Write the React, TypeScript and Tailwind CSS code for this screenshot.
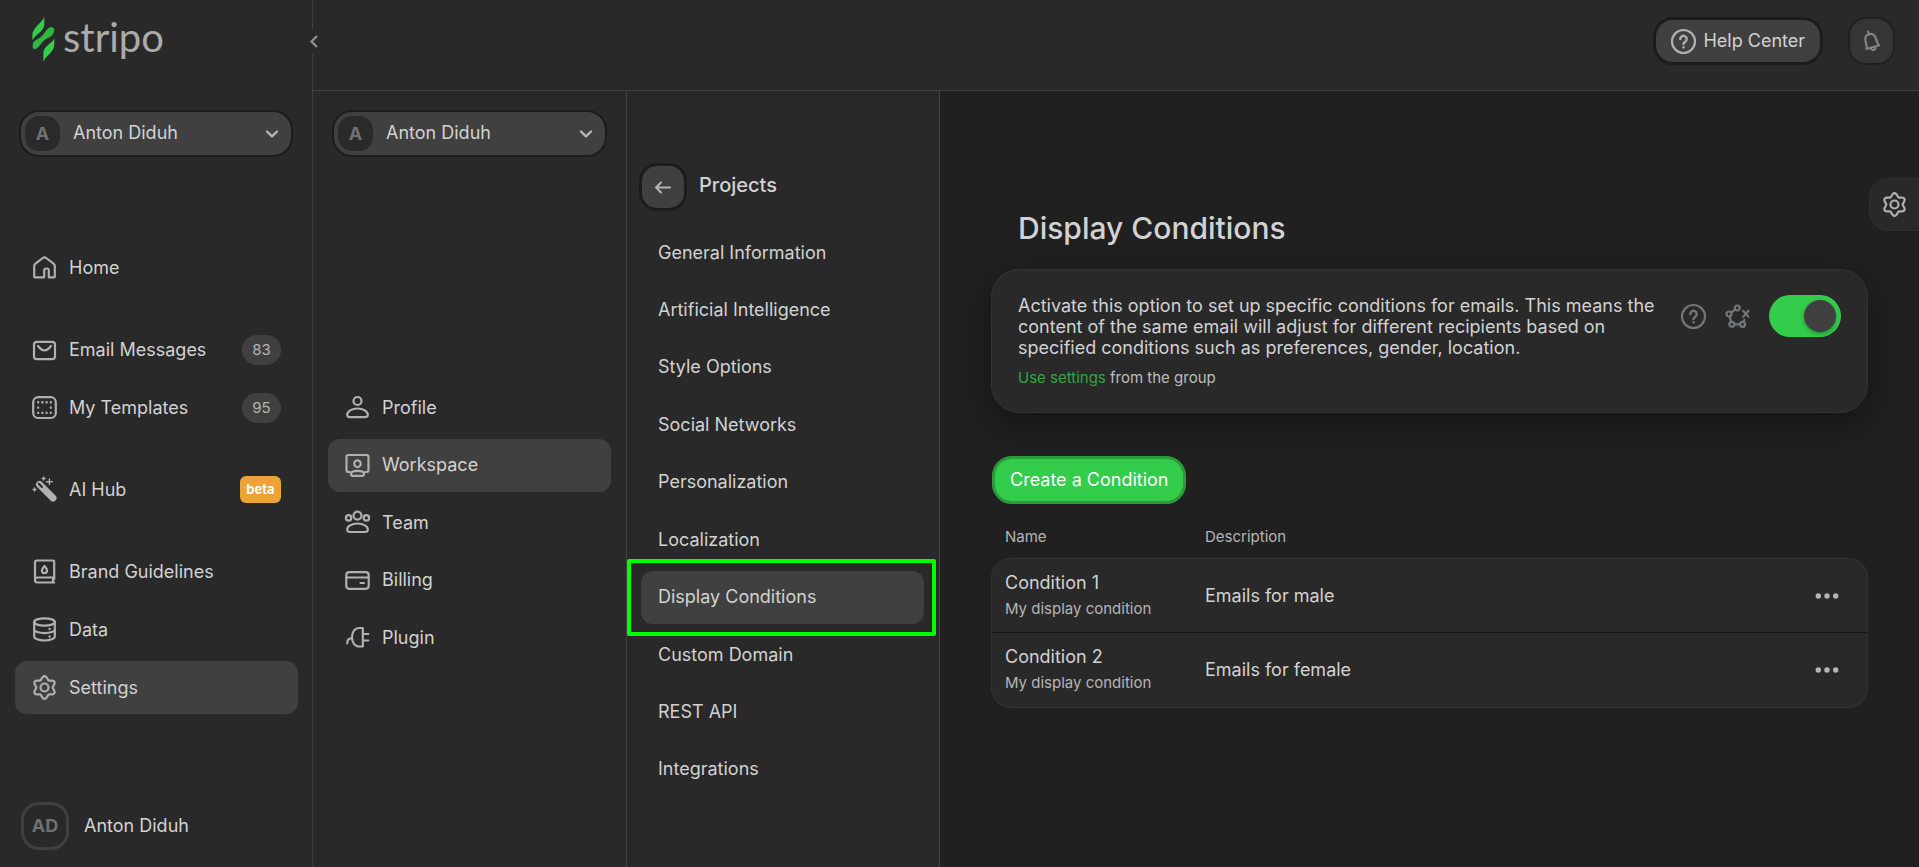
import React, { useState } from "react";

const gearPath =
  Array.from({ length: 72 }, (_, i) => {
    const a = (i * Math.PI) / 36;
    const r = 9.8 + 1.6 * Math.cos(6 * a);
    const x = 12.5 + r * Math.sin(a);
    const y = 12.5 - r * Math.cos(a);
    return `${i === 0 ? "M" : "L"}${x.toFixed(2)} ${y.toFixed(2)}`;
  }).join("") + "Z";

const icons = {
  home: (
    <path d="M2.2 21.5V11.2q0-1.6 1.3-2.6L10.8 3q1.7-1.3 3.4 0l7.3 5.6q1.3 1 1.3 2.6v10.3q0 .8-.8.8h-5.2v-6.8q0-2-2-2h-.6q-2 0-2 2v6.8H3q-.8 0-.8-.8z" />
  ),
  mail: (
    <>
      <rect x="2" y="4.800" width="21" height="17.400" rx="3" />
      <path d="M6 9q3.600 4.500 6.500 4.500T19 9" />
    </>
  ),
  templates: (
    <>
      <rect x="1.200" y="2.200" width="22.600" height="20.800" rx="5" />
      <path
        d="M5.200 7.300h2M9.400 7.300h2M13.600 7.300h2M17.800 7.300h2M5.200 12.600h2M17.800 12.600h2M5.200 17.900h2M9.400 17.900h2M13.600 17.900h2M17.800 17.900h2"
        strokeLinecap="butt"
        strokeWidth="2.400"
      />
    </>
  ),
  wand: (
    <>
      <path d="M7.500 7.500 21 21" strokeWidth="7" />
      <path d="M6.800 6.800l3.200 3.200" stroke="#292929" strokeWidth="2" />
      <path d="M17.400 2v5.600M14.600 4.800h5.600M11.600 0v3M10.100 1.500h3M2.500 11v3M1 12.500h3" strokeWidth="1.400" />
    </>
  ),
  brand: (
    <>
      <path d="M22.200 20V2.500q0-1-1-1H5q-2 0-2 2V21q0 2.500 2.500 2.500h16.700M3 20.500q.5-2 2.500-2h16.700M21 18.500v5" />
      <path d="M12.500 7q2.600 3 2.600 4.500a2.600 2.600 0 0 1-5.200 0Q9.900 10 12.500 7z" />
    </>
  ),
  data: (
    <>
      <ellipse cx="12.500" cy="5" rx="10.300" ry="3.700" />
      <path d="M2.200 5v14.500c0 2.200 4.600 4 10.300 4s10.300-1.800 10.300-4V5M2.200 12.500c0 2 4.600 3.600 10.300 3.600s10.300-1.600 10.300-3.600" />
      <path d="M17.600 12v.1M17.600 19.500v.1" strokeWidth="2.400" />
    </>
  ),
  gear: (
    <>
      <path d={gearPath} />
      <circle cx="12.500" cy="12.500" r="4" />
    </>
  ),
  profile: (
    <>
      <circle cx="12.500" cy="6" r="4" />
      <path d="M12.500 13.500c6 0 10.300 3 10.300 6.300 0 1.800-1 2.400-2.800 2.400H5c-1.800 0-2.800-.6-2.800-2.400 0-3.300 4.300-6.300 10.300-6.300z" />
    </>
  ),
  workspace: (
    <>
      <path d="M4.800 19H3.500q-2 0-2-2V4q0-2 2-2h18q2 0 2 2v13q0 2-2 2h-1.300" />
      <circle cx="12.500" cy="10.700" r="3.300" />
      <path d="M12.500 17.800c4 0 6.600 1.500 6.600 3.300 0 1.300-.8 1.700-2 1.700H7.900c-1.200 0-2-.4-2-1.700 0-1.800 2.600-3.300 6.600-3.300z" />
    </>
  ),
  team: (
    <>
      <circle cx="12.500" cy="5.600" r="4" />
      <circle cx="3.600" cy="7.900" r="2.700" />
      <circle cx="21.400" cy="7.900" r="2.700" />
      <path d="M12.500 13.500c6 0 10.300 3 10.300 6 0 1.800-1 2.500-2.800 2.500H5c-1.800 0-2.800-.7-2.800-2.500 0-3 4.300-6 10.300-6z" />
    </>
  ),
  billing: (
    <>
      <rect x="1.300" y="4.200" width="22.400" height="16.600" rx="3" />
      <path d="M1.300 9.500h22.400M15.500 15h3.500" />
    </>
  ),
  plugin: (
    <path d="M17.800 3v18.500h-3.500c-4.500 0-7.300-4-7.300-9.200S9.800 3 14.300 3zM17.800 9h5.500M17.800 15.500h5.500M7 13.500c-3.500-.5-4.800 1.700-4.800 4.800" />
  ),
  help: (
    <>
      <circle cx="12.500" cy="12.500" r="11.500" />
      <path d="M9.300 10a3.200 3.200 0 1 1 4.900 2.700q-1.700 1-1.700 2.300M12.500 18.300v.1" strokeWidth="2.400" />
    </>
  ),
  network: (
    <>
      <circle cx="12.300" cy="4" r="2.500" />
      <circle cx="4" cy="10" r="2.500" />
      <circle cx="6.800" cy="20.300" r="2.500" />
      <circle cx="17.600" cy="20.300" r="2.500" />
      <path d="M10 5.600 6.200 8.400M4.700 12.700l1.400 5M9.600 20.300h5M18.800 17.800l.6-2M18.300 7l5 5.600M23.500 6.800l-5.200 6" />
    </>
  ),
  bell: (
    <g transform="rotate(-16 12.500 12.500)">
      <path d="M12 2v2.500M5.500 18.300c1.400-1.600 1.300-3.800 1.300-7.300 0-3.600 2-6.300 5.400-6.300s5.400 2.700 5.400 6.300c0 3.500-.1 5.700 1.300 7.300zM10 18.500c0 3.700 4.600 3.700 4.600 0" />
    </g>
  ),
};

type IconName = keyof typeof icons;

const Icon = ({ name, className = "text-[#b0b0b0]" }: { name: IconName; className?: string }) => (
  <svg
    viewBox="0 0 25 25"
    aria-hidden="true"
    className={`size-[25px] shrink-0 overflow-visible ${className}`}
    fill="none"
    stroke="currentColor"
    strokeWidth="2.200"
    strokeLinecap="round"
    strokeLinejoin="round"
  >
    {icons[name]}
  </svg>
);

type NavItem = {
  label: string;
  icon?: IconName;
  count?: number;
  beta?: boolean;
  active?: boolean;
};

const mainNav: NavItem[][] = [
  [{ label: "Home", icon: "home" }],
  [
    { label: "Email Messages", icon: "mail", count: 83 },
    { label: "My Templates", icon: "templates", count: 95 },
  ],
  [{ label: "AI Hub", icon: "wand", beta: true }],
  [
    { label: "Brand Guidelines", icon: "brand" },
    { label: "Data", icon: "data" },
    { label: "Settings", icon: "gear", active: true },
  ],
];

const settingsNav: NavItem[] = [
  { label: "Profile", icon: "profile" },
  { label: "Workspace", icon: "workspace", active: true },
  { label: "Team", icon: "team" },
  { label: "Billing", icon: "billing" },
  { label: "Plugin", icon: "plugin" },
];

const projectNav: NavItem[] = [
  { label: "General Information" },
  { label: "Artificial Intelligence" },
  { label: "Style Options" },
  { label: "Social Networks" },
  { label: "Personalization" },
  { label: "Localization" },
  { label: "Display Conditions", active: true },
  { label: "Custom Domain" },
  { label: "REST API" },
  { label: "Integrations" },
];

const conditions = [
  { id: 1, name: "Condition 1", note: "My display condition", description: "Emails for male" },
  { id: 2, name: "Condition 2", note: "My display condition", description: "Emails for female" },
];

const NavLink = ({ item }: { item: NavItem }) => (
  <a
    href="#"
    aria-current={item.active ? "page" : undefined}
    className={`flex h-[53px] items-center gap-3 rounded-xl px-[17px] ${item.active ? "bg-[#404040]" : ""}`}
  >
    {item.icon && <Icon name={item.icon} />}
    <span className="flex-1">{item.label}</span>
    {item.count && (
      <span className="flex h-[30px] w-[39px] items-center justify-center rounded-full bg-[#404040] text-[15px] text-[#b5b5b5]">
        {item.count}
      </span>
    )}
    {item.beta && (
      <span className="flex h-[27px] w-[41px] items-center justify-center rounded-md bg-[#eda336] text-[13px] font-bold text-white">
        beta
      </span>
    )}
  </a>
);

const AccountSelect = ({ id }: { id: string }) => (
  <div className="relative flex h-[47px] items-center gap-[13px] rounded-[20px] border-2 border-[#1c1c1c] bg-[#404040] pl-1">
    <span className="flex size-[35px] shrink-0 items-center justify-center rounded-[14px] bg-[#2a2a2a] font-bold text-[#6f7172]">
      A
    </span>
    <select id={id} aria-label="Organization" className="h-full flex-1 appearance-none bg-transparent pb-0.5 outline-none">
      <option>Anton Diduh</option>
    </select>
    <svg
      viewBox="0 0 14 9"
      aria-hidden="true"
      className="pointer-events-none absolute right-3 h-[9px] w-[14px]"
      fill="none"
      stroke="#b5b5b5"
      strokeWidth="2.400"
      strokeLinecap="round"
      strokeLinejoin="round"
    >
      <path d="M2 2.500 7 7.300l5-4.800" />
    </svg>
  </div>
);

const Logo = () => (
  <a href="#" className="flex items-start gap-2 text-[#ababab]">
    <svg viewBox="0 0 72 140" aria-hidden="true" className="h-[47px] w-6">
      <path d="M40 2C34 20 4 34 4 58v15C10 56 40 46 40 24z" fill="#33cc4b" />
      <path
        d="M70 40c-2-9-14-8-21-1C38 50 36 62 18 70 8 75 5 80 5 88c0 13 7 14 15 7C31 85 34 74 48 67c14-6 22-14 22-27z"
        fill="#2eb843"
      />
      <path d="M70 66C64 82 37 88 37 112v25C44 118 70 108 70 84z" fill="#33cc4b" />
    </svg>
    <span className="font-['Lato',sans-serif] text-[40px] leading-[42px]">stripo</span>
  </a>
);

const App = () => {
  const [enabled, setEnabled] = useState(true);

  return (
    <div className="flex min-h-screen bg-[#202020] font-['Inter',sans-serif] text-lg text-[#d2d2d2]">
      {/* Main sidebar */}
      <aside className="relative flex w-[313px] shrink-0 flex-col border-r border-[#404040] bg-[#292929] pb-[17px]">
        <div className="pt-4 pl-[31px]">
          <Logo />
        </div>
        <button
          type="button"
          aria-label="Collapse sidebar"
          className="absolute top-[29px] -right-2.5 flex h-[25px] w-4 items-center justify-center bg-[#292929]"
        >
          <svg viewBox="0 0 8 13" className="h-[13px] w-2" fill="none" stroke="#8a8c8d" strokeWidth="2.400">
            <path d="M7 1 1.500 6.500 7 12" />
          </svg>
        </button>
        <div className="mt-[47px] px-[19px]">
          <AccountSelect id="account" />
        </div>
        <nav className="mt-[84px] flex flex-col gap-[29px] pr-3.5 pl-[15px]">
          {mainNav.map((group, index) => (
            <ul key={index} className="flex flex-col gap-[5px]">
              {group.map((item) => (
                <li key={item.label}>
                  <NavLink item={item} />
                </li>
              ))}
            </ul>
          ))}
        </nav>
        <div className="mt-auto flex items-center gap-[15px] pl-[21px]">
          <span className="flex size-12 items-center justify-center rounded-[18px] border-[3px] border-[#404040] font-bold text-[#6f7172]">
            AD
          </span>
          <span>Anton Diduh</span>
        </div>
      </aside>

      <div className="flex min-w-0 flex-1 flex-col">
        {/* Top bar */}
        <header className="flex h-[91px] shrink-0 items-start justify-end gap-[25px] border-b border-[#404040] bg-[#292929] pt-[17px] pr-6">
          <button
            type="button"
            className="flex h-12 items-center gap-[7px] rounded-[20px] border-[3px] border-[#1c1c1c] bg-[#404040] px-[15px]"
          >
            <Icon name="help" />
            Help Center
          </button>
          <button
            type="button"
            aria-label="Notifications"
            className="flex h-12 w-[47px] items-center justify-center rounded-[18px] border-2 border-[#202020] bg-[#343636]"
          >
            <Icon name="bell" className="text-[#818485]" />
          </button>
        </header>

        <div className="flex flex-1">
          {/* Settings sections */}
          <aside className="w-[314px] shrink-0 border-r border-[#404040] bg-[#292929] pt-[19px]">
            <div className="px-[19px]">
              <AccountSelect id="settings-account" />
            </div>
            <ul className="mt-56 flex min-h-[283px] flex-col justify-between px-[15px]">
              {settingsNav.map((item) => (
                <li key={item.label}>
                  <NavLink item={item} />
                </li>
              ))}
            </ul>
          </aside>

          {/* Project sections */}
          <aside className="w-[313px] shrink-0 border-r border-[#404040] bg-[#292929] pt-[72px] pr-[15px] pl-3.5">
            <div className="-ml-0.5 flex items-start gap-3">
              <button
                type="button"
                aria-label="Back"
                className="flex size-12 items-center justify-center rounded-[18px] border-[3px] border-[#1c1c1c] bg-[#404040]"
              >
                <svg
                  viewBox="0 0 16 13"
                  className="h-[13px] w-4"
                  fill="none"
                  stroke="#b5b5b5"
                  strokeWidth="2"
                  strokeLinecap="round"
                  strokeLinejoin="round"
                >
                  <path d="M15 6.500H1M6 1.500l-5 5 5 5" />
                </svg>
              </button>
              <h2 className="pt-1.5 text-xl leading-8 font-medium">Projects</h2>
            </div>
            <ul className="mt-[15px] flex min-h-[570px] flex-col justify-between">
              {projectNav.map((item) => (
                <li key={item.label} className="relative">
                  <NavLink item={item} />
                  {item.active && (
                    <span className="pointer-events-none absolute -top-3 -right-3 -bottom-3 -left-3.5 rounded-xs border-4 border-[#00ff00]" />
                  )}
                </li>
              ))}
            </ul>
          </aside>

          {/* Content */}
          <main className="relative min-w-0 flex-1 px-[51px] pt-[115px]">
            <button
              type="button"
              aria-label="Panel settings"
              className="absolute top-[87px] right-0 flex h-[53px] w-[50px] items-center rounded-l-[20px] border border-r-0 border-[#2e2e2e] bg-[#292929] pl-3"
            >
              <Icon name="gear" />
            </button>

            <h1 className="pl-[27px] text-[30px] leading-[44px] font-medium">Display Conditions</h1>

            <section className="mt-[19px] flex items-start justify-between rounded-[28px] border border-[#333333] bg-[#292929] px-[26px] pt-[25px] pb-[22px] shadow-[0_12px_36px_rgba(0,0,0,0.4)]">
              <div className="max-w-[640px]">
                <p className="leading-[21px]">
                  Activate this option to set up specific conditions for emails. This means the content of the same
                  email will adjust for different recipients based on specified conditions such as preferences,
                  gender, location.
                </p>
                <p className="mt-2 text-[15px] leading-6 text-[#bdbdbd]">
                  <a href="#" className="text-[#30a644]">
                    Use settings
                  </a>{" "}
                  from the group
                </p>
              </div>
              <div className="flex items-center gap-[19px]">
                <Icon name="help" className="text-[#737576]" />
                <Icon name="network" className="text-[#737576]" />
                <input
                  type="checkbox"
                  role="switch"
                  aria-label="Display conditions"
                  checked={enabled}
                  onChange={() => setEnabled(!enabled)}
                  className="h-[42px] w-[72px] appearance-none rounded-full bg-[#606060] p-[5px] before:block before:size-8 before:rounded-full before:bg-[#404040] before:shadow-[0_2px_4px_rgba(0,0,0,0.3)] checked:bg-[#33cc4b] checked:before:ml-auto"
                />
              </div>
            </section>

            <button
              type="button"
              className="mt-[43px] ml-px h-12 rounded-[20px] border-[3px] border-[#2c9a3b] bg-[#33cc4b] px-[15px] text-white"
            >
              Create a Condition
            </button>

            <table className="mt-[21px] w-full border-separate border-spacing-0 text-left">
              <thead>
                <tr className="h-[33px] align-top text-[15px] leading-6 text-[#b5b5b5]">
                  <th className="w-[200px] pl-3.5 font-normal">Name</th>
                  <th className="pl-3.5 font-normal">Description</th>
                  <th aria-label="Actions" className="w-[82px]" />
                </tr>
              </thead>
              <tbody>
                {conditions.map((condition) => (
                  <tr
                    key={condition.id}
                    className="group h-[75px] *:border-b *:border-[#333333] *:bg-[#292929] *:group-first:border-t *:group-first:border-b-[#161616]"
                  >
                    <td className="border-l pt-0.5 pl-[13px] group-first:rounded-tl-[20px] group-last:rounded-bl-[20px]">
                      <p className="leading-6">{condition.name}</p>
                      <p className="text-[15px] leading-7 text-[#b5b5b5]">{condition.note}</p>
                    </td>
                    <td className="pl-3.5">{condition.description}</td>
                    <td className="border-r group-first:rounded-tr-[20px] group-last:rounded-br-[20px]">
                      <button type="button" aria-label="More actions" className="flex h-8 w-full items-center justify-center">
                        <svg viewBox="0 0 24 6" className="h-1.5 w-6" fill="#b5b5b5">
                          <circle cx="3.300" cy="3" r="2.700" />
                          <circle cx="12" cy="3" r="2.700" />
                          <circle cx="20.700" cy="3" r="2.700" />
                        </svg>
                      </button>
                    </td>
                  </tr>
                ))}
              </tbody>
            </table>
          </main>
        </div>
      </div>
    </div>
  );
};

export default App;
